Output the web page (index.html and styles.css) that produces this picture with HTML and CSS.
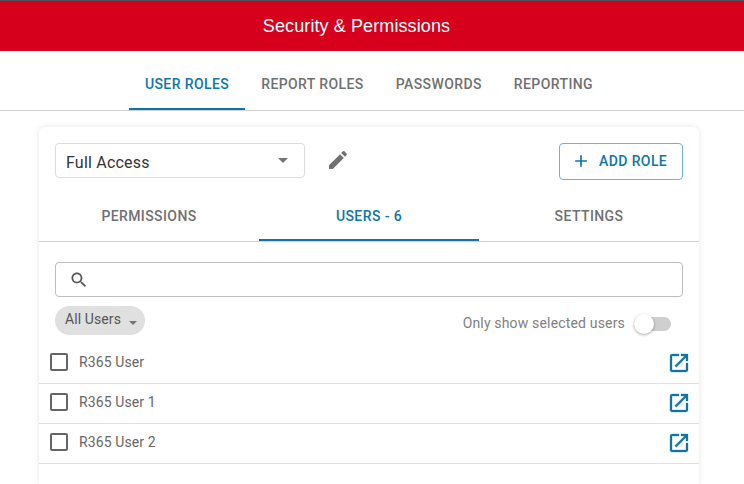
FILE: index.html
```html
<!DOCTYPE html>
<html lang="en">
<head>
<meta charset="utf-8">
<title>Security &amp; Permissions</title>
<link rel="stylesheet" href="styles.css">
</head>
<body>
<header class="banner">Security &amp; Permissions</header>
<nav class="main-tabs">
  <a class="main-tab active">USER ROLES</a>
  <a class="main-tab">REPORT ROLES</a>
  <a class="main-tab">PASSWORDS</a>
  <a class="main-tab">REPORTING</a>
</nav>
<main class="content">
  <section class="card">
    <div class="role-row">
      <div class="role-select">
        <span class="role-name">Full Access</span>
        <span class="caret"></span>
      </div>
      <svg class="pencil" viewBox="0 0 24 24" width="24" height="24"><path d="M3 17.25V21h3.75L17.81 9.94l-3.75-3.75L3 17.25zM20.71 7.04c.39-.39.39-1.02 0-1.41l-2.34-2.34c-.39-.39-1.02-.39-1.41 0l-1.83 1.83 3.75 3.75 1.83-1.83z"/></svg>
      <button class="add-role">
        <svg viewBox="0 0 24 24" width="20" height="20"><path d="M19 13h-6v6h-2v-6H5v-2h6V5h2v6h6v2z"/></svg>
        <span>ADD ROLE</span>
      </button>
    </div>
    <div class="sub-tabs">
      <a class="sub-tab">PERMISSIONS</a>
      <a class="sub-tab active">USERS - 6</a>
      <a class="sub-tab">SETTINGS</a>
    </div>
    <div class="filters">
      <div class="search">
        <svg viewBox="0 0 24 24" width="20" height="20"><path d="M15.5 14h-.79l-.28-.27C15.41 12.59 16 11.11 16 9.5 16 5.91 13.09 3 9.5 3S3 5.91 3 9.5 5.91 16 9.5 16c1.61 0 3.09-.59 4.23-1.57l.27.28v.79l5 4.99L20.49 19l-4.99-5zm-6 0C7.01 14 5 11.99 5 9.5S7.01 5 9.5 5 14 7.01 14 9.5 11.99 14 9.5 14z"/></svg>
      </div>
      <div class="filter-row">
        <div class="chip"><span>All Users</span><span class="chip-caret"></span></div>
        <div class="only-selected">
          <span>Only show selected users</span>
          <span class="switch"><span class="thumb"></span></span>
        </div>
      </div>
    </div>
    <ul class="users">
      <li class="user"><span class="box"></span><span class="name">R365 User</span><svg class="open" viewBox="0 0 24 24" width="24" height="24"><path d="M19 19H5V5h7V3H5c-1.11 0-2 .9-2 2v14c0 1.1.89 2 2 2h14c1.1 0 2-.9 2-2v-7h-2v7zM14 3v2h3.59l-9.83 9.83 1.41 1.41L19 6.41V10h2V3h-7z"/></svg></li>
      <li class="user"><span class="box"></span><span class="name">R365 User 1</span><svg class="open" viewBox="0 0 24 24" width="24" height="24"><path d="M19 19H5V5h7V3H5c-1.11 0-2 .9-2 2v14c0 1.1.89 2 2 2h14c1.1 0 2-.9 2-2v-7h-2v7zM14 3v2h3.59l-9.83 9.83 1.41 1.41L19 6.41V10h2V3h-7z"/></svg></li>
      <li class="user"><span class="box"></span><span class="name">R365 User 2</span><svg class="open" viewBox="0 0 24 24" width="24" height="24"><path d="M19 19H5V5h7V3H5c-1.11 0-2 .9-2 2v14c0 1.1.89 2 2 2h14c1.1 0 2-.9 2-2v-7h-2v7zM14 3v2h3.59l-9.83 9.83 1.41 1.41L19 6.41V10h2V3h-7z"/></svg></li>
    </ul>
  </section>
</main>
</body>
</html>
```

FILE: styles.css
```css
* { box-sizing: border-box; }
body {
  margin: 0;
  height: 484px;
  overflow: hidden;
  background: #fff;
  font-family: Roboto, sans-serif;
  color: #6b6b6b;
}
.banner {
  height: 51px;
  padding-right: 31px;
  border-top: 1px solid #555;
  background: #d6001c;
  color: #fff;
  font-family: "Liberation Sans", Arial, sans-serif;
  font-size: 18px;
  letter-spacing: .1px;
  line-height: 51px;
  text-align: center;
}
.main-tabs {
  display: flex;
  justify-content: center;
  height: 60px;
  padding-right: 6px;
  border-bottom: 1px solid #d2d2d2;
}
.main-tab {
  display: flex;
  align-items: center;
  height: 59px;
  padding: 8px 16px 0;
  font-size: 14px;
  font-weight: 500;
  letter-spacing: .4px;
  color: #707070;
  border-bottom: 2px solid transparent;
}
.main-tab.active { color: #0d76a8; border-bottom-color: #0d76a8; }
.content { padding: 16px 45px 0 39px; }
.card {
  height: 357px;
  border-radius: 6px 6px 0 0;
  background: #fff;
  box-shadow: 0 0 6px rgba(0, 0, 0, .1);
}
.role-row {
  display: flex;
  align-items: flex-start;
  padding: 16px 16px 0;
}
.role-select {
  display: flex;
  align-items: center;
  justify-content: space-between;
  width: 250px;
  height: 35px;
  padding: 0 16px 0 10px;
  border: 1px solid #dcdcdc;
  border-radius: 4px;
  font-size: 16px;
  letter-spacing: .2px;
  color: #333;
}
.role-name { padding-top: 3px; }
.caret {
  width: 0;
  height: 0;
  margin-top: -1px;
  border: 5px solid transparent;
  border-top-color: #757575;
  border-bottom: 0;
}
.pencil { margin: 5px 0 0 21px; fill: #707070; }
.add-role {
  display: flex;
  align-items: center;
  gap: 8px;
  width: 124px;
  height: 37px;
  margin-left: auto;
  padding: 0 0 2px 11px;
  border: 1px solid #6db3d3;
  border-radius: 4px;
  background: #fff;
  color: #0d76a8;
  font: 500 14px Roboto, sans-serif;
  letter-spacing: .4px;
}
.add-role svg { fill: #0d76a8; }
.sub-tabs {
  display: flex;
  height: 45px;
  margin-top: 17px;
  border-bottom: 1px solid #d2d2d2;
}
.sub-tab {
  display: flex;
  align-items: center;
  justify-content: center;
  width: 220px;
  height: 44px;
  padding-bottom: 5px;
  font-size: 14px;
  font-weight: 500;
  letter-spacing: .4px;
  color: #707070;
  border-bottom: 2px solid transparent;
}
.sub-tab.active { color: #0d76a8; border-bottom-color: #0d76a8; }
.filters { padding: 20px 16px 0; }
.search {
  display: flex;
  align-items: center;
  height: 35px;
  padding-left: 13px;
  border: 1px solid #bdbdbd;
  border-radius: 4px;
}
.search svg { fill: #555; }
.filter-row {
  display: flex;
  justify-content: space-between;
  margin-top: 9px;
}
.chip {
  display: flex;
  align-items: center;
  gap: 8px;
  width: 90px;
  height: 29px;
  padding: 0 0 4px 10px;
  border-radius: 15px;
  background: #e0e0e0;
  font-size: 14px;
  letter-spacing: .1px;
  color: #555;
}
.chip-caret {
  width: 0;
  height: 0;
  margin-top: 8px;
  border: 4px solid transparent;
  border-top-color: #757575;
  border-bottom: 0;
}
.only-selected {
  display: flex;
  align-items: center;
  gap: 9px;
  margin-top: 3px;
  height: 27px;
  font-size: 14px;
  letter-spacing: .17px;
  color: #808080;
}
.switch {
  position: relative;
  display: block;
  width: 37px;
  height: 14px;
  margin: 3px 12px 0 0;
  border-radius: 7px;
  background: #cfcfcf;
}
.thumb {
  position: absolute;
  top: -3px;
  left: 0;
  width: 20px;
  height: 20px;
  border-radius: 50%;
  background: #fff;
  box-shadow: 0 1px 3px rgba(0, 0, 0, .35);
}
.users { margin: 8px 0 0; padding: 0; list-style: none; }
.user {
  display: flex;
  align-items: center;
  height: 40px;
  padding: 0 8px 0 11px;
  border-bottom: 1px solid #e0e0e0;
  font-size: 14px;
  letter-spacing: .1px;
  color: #666;
}
.box {
  width: 18px;
  height: 18px;
  margin-top: -3px;
  border: 2px solid #666;
  border-radius: 2px;
}
.name { flex: 1; margin: -3px 0 0 11px; }
.open { fill: #0d76a8; stroke: #0d76a8; stroke-width: .3; margin-top: -1px; }
```
